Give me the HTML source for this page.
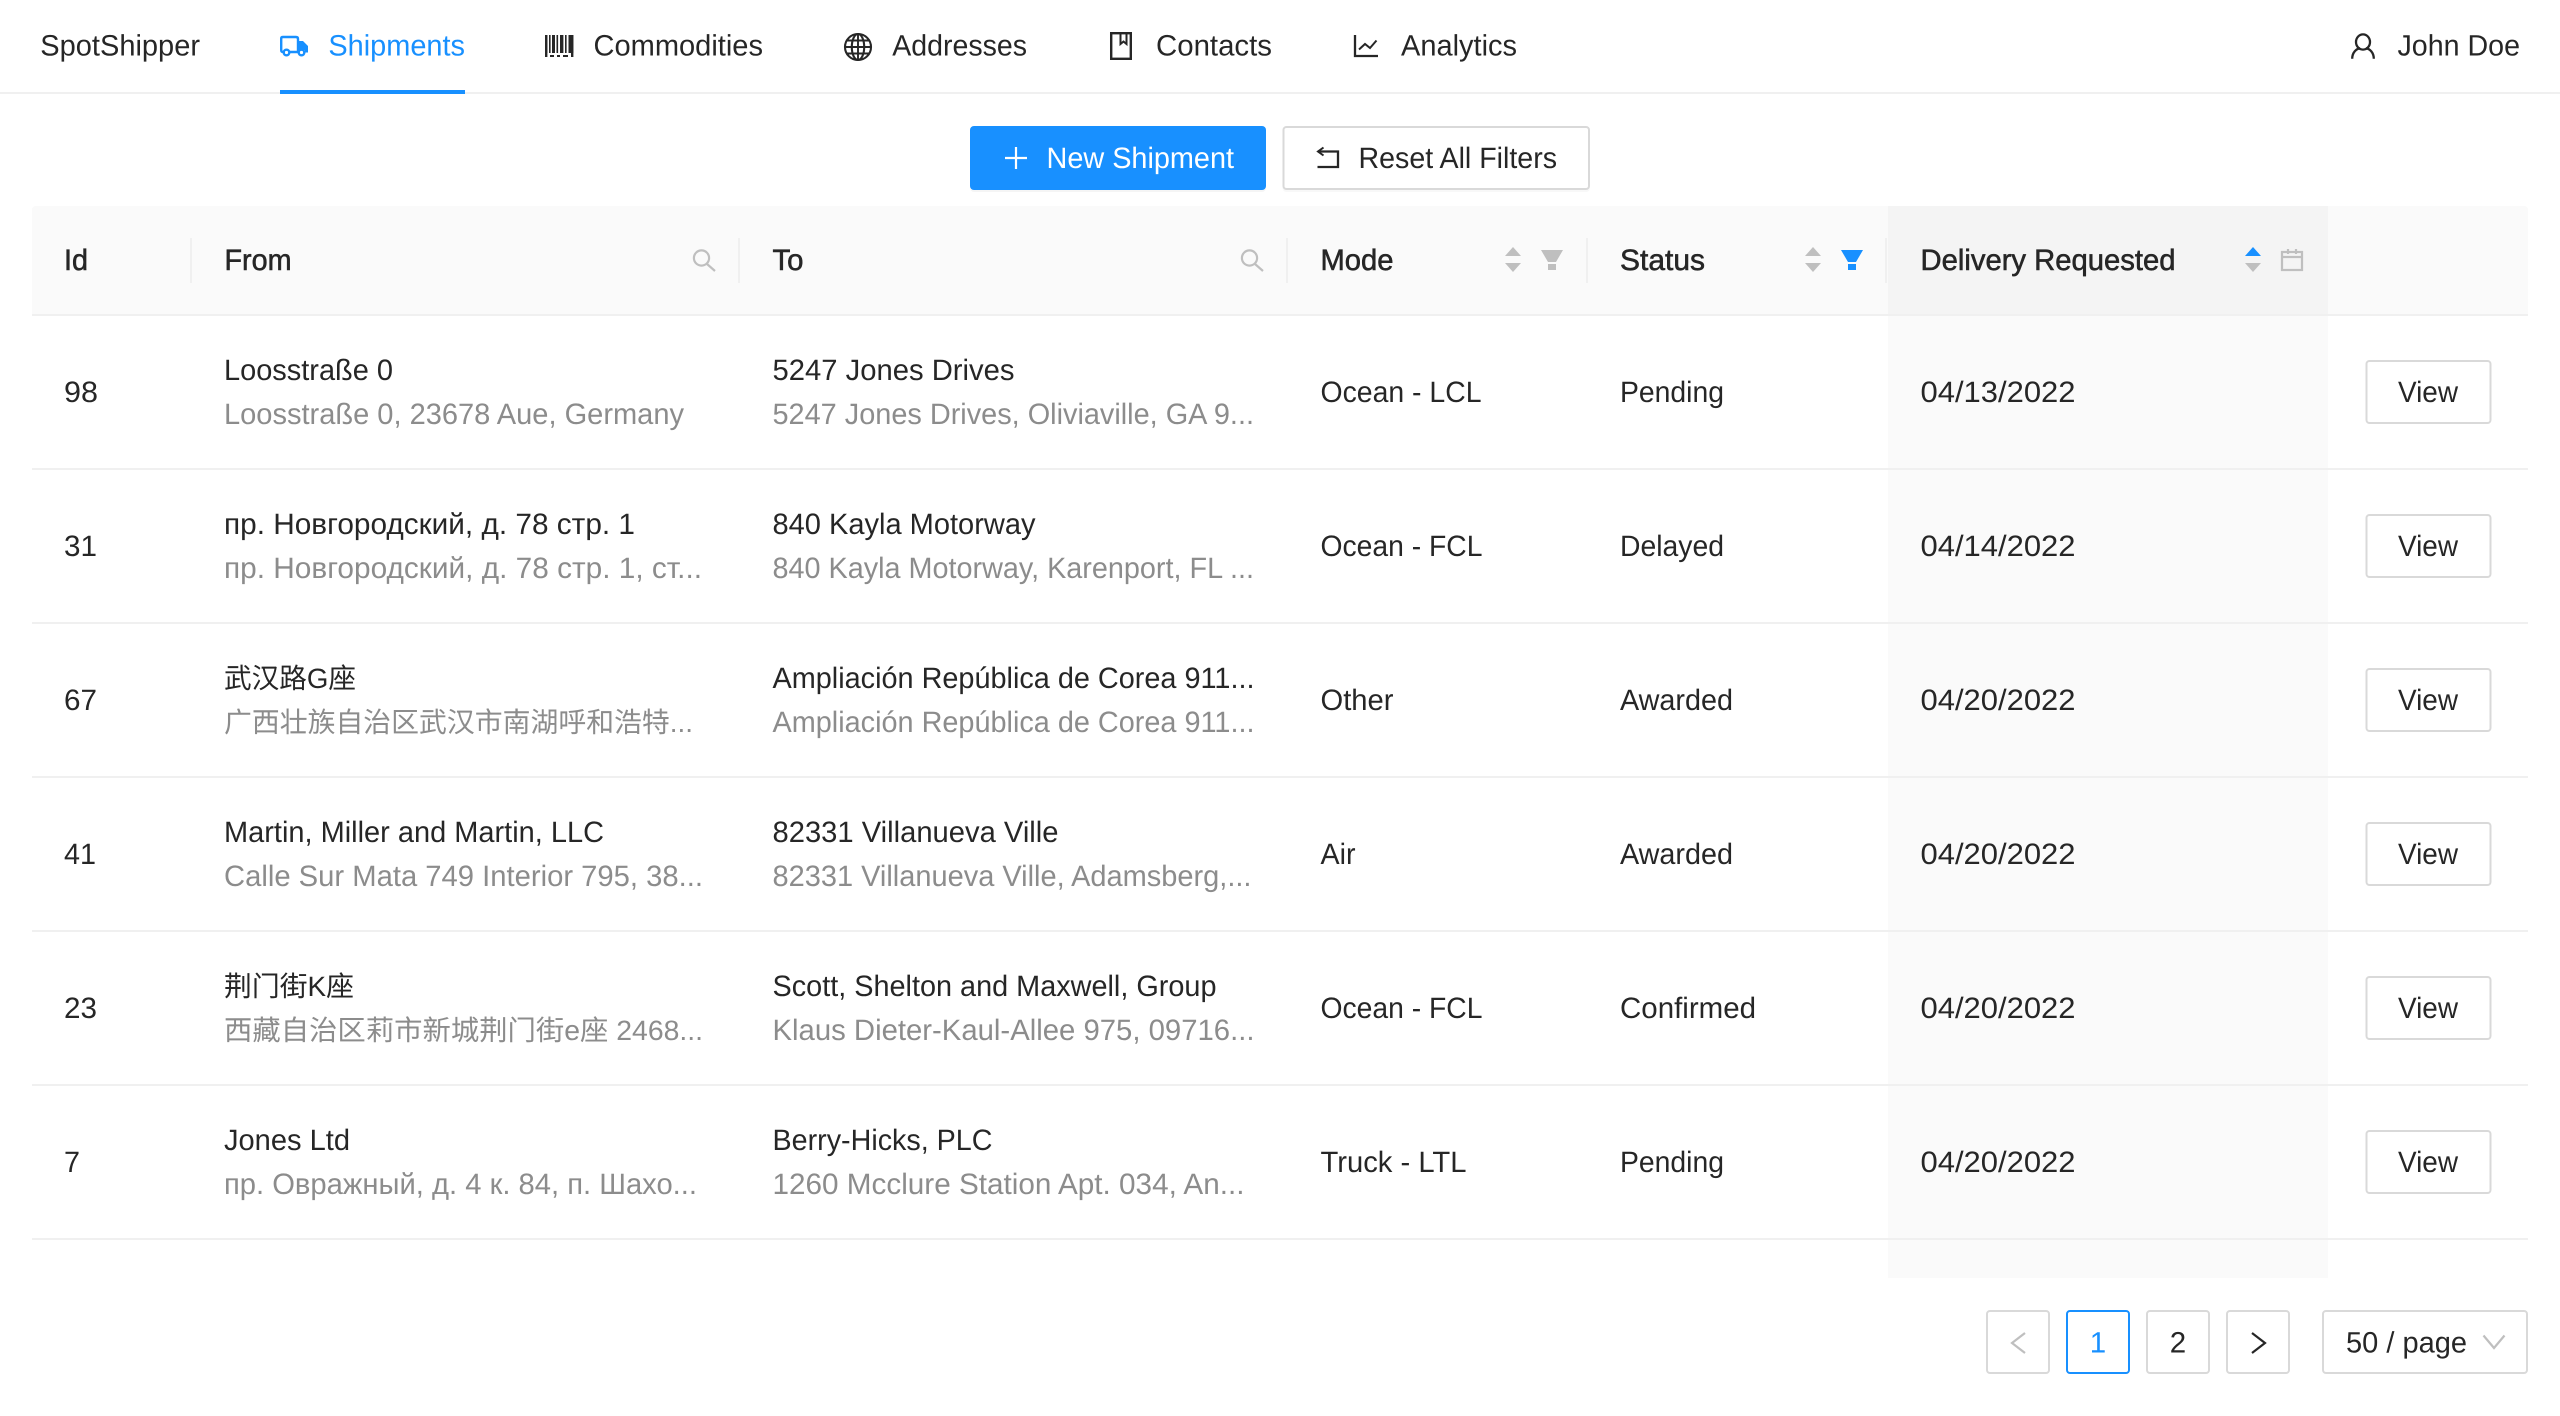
<!DOCTYPE html>
<html lang="en"><head><meta charset="utf-8"><title>SpotShipper</title>
<style>
html,body{margin:0;padding:0;background:#fff;width:2560px;height:1416px;overflow:hidden}
svg{display:block}
text{font-family:"Liberation Sans","Noto Sans CJK SC",sans-serif;font-size:29.5px;fill:#262626;text-rendering:geometricPrecision}
.s{fill:#8c8c8c}
.c{font-size:28px}
.h{stroke:#262626;stroke-width:.55px}
.g{fill:none;stroke:#bfbfbf;stroke-width:2.2}
</style></head><body>
<svg width="2560" height="1416" viewBox="0 0 2560 1416" xmlns="http://www.w3.org/2000/svg">
<rect width="2560" height="1416" fill="#fff"/>
<!-- nav -->
<rect x="0" y="92" width="2560" height="2" fill="#f0f0f0"/>
<rect x="280" y="90" width="185" height="4" fill="#1890ff"/>
<text x="40.3" y="55.5" textLength="159.7" lengthAdjust="spacingAndGlyphs">SpotShipper</text>
<text x="328.4" y="55.5" textLength="136.6" lengthAdjust="spacingAndGlyphs" style="fill:#1890ff">Shipments</text>
<text x="593.5" y="55.5" textLength="169.5" lengthAdjust="spacingAndGlyphs">Commodities</text>
<text x="892.3" y="55.5" textLength="134.7" lengthAdjust="spacingAndGlyphs">Addresses</text>
<text x="1156" y="55.5" textLength="116" lengthAdjust="spacingAndGlyphs">Contacts</text>
<text x="1401" y="55.5" textLength="116" lengthAdjust="spacingAndGlyphs">Analytics</text>
<text x="2397.5" y="55.5" textLength="122.5" lengthAdjust="spacingAndGlyphs">John Doe</text>
<!-- truck -->
<g fill="none" stroke="#1890ff" stroke-width="2.4">
<path d="M285 52H283Q281.2 52 281.2 50V38.5Q281.2 37 283 37H296Q298 37 298 39V52H290"/>
<circle cx="286.5" cy="52.5" r="2.8"/><circle cx="301.5" cy="52.5" r="2.8"/>
</g>
<path d="M298 41H303L308 46V52.5H305V50H298Z" fill="#1890ff"/>
<!-- barcode -->
<g fill="#262626">
<rect x="545" y="35" width="2.4" height="18"/><rect x="549" y="35" width="1.6" height="18"/>
<rect x="552" y="35" width="3" height="18"/><rect x="556.5" y="35" width="1.6" height="18"/>
<rect x="560" y="35" width="3.4" height="18"/><rect x="565" y="35" width="1.6" height="18"/>
<rect x="568.5" y="35" width="4.8" height="18"/><rect x="545" y="35" width="2.4" height="22"/>
<rect x="571" y="35" width="2.4" height="22"/><rect x="550" y="55" width="4" height="2"/>
<rect x="557" y="55" width="3" height="2"/><rect x="563" y="55" width="5" height="2"/>
</g>
<!-- globe -->
<g fill="none" stroke="#262626" stroke-width="2.1">
<circle cx="858" cy="47" r="13"/><ellipse cx="858" cy="47" rx="6.2" ry="13"/>
<path d="M858 34V60M845 47H871M847 40.5H869M847 53.5H869" stroke-width="1.9"/>
</g>
<!-- book -->
<g fill="none" stroke="#262626" stroke-width="2.4">
<rect x="1111.2" y="33.2" width="19.6" height="25.6"/>
<path d="M1120.5 33.5V44L1123.5 41.5L1126.5 44V33.5" stroke-width="2"/>
</g>
<!-- analytics -->
<path d="M1355 35V56H1378" fill="none" stroke="#262626" stroke-width="2.3"/>
<path d="M1359 49.5L1365 44L1370 48L1376.5 40.5" fill="none" stroke="#262626" stroke-width="2"/>
<!-- user -->
<g fill="none" stroke="#262626" stroke-width="2.3">
<ellipse cx="2363" cy="42" rx="7" ry="7.6"/>
<path d="M2352.2 58.8C2352.2 52.5 2356.5 48.6 2360 48.3M2373.8 58.8C2373.8 52.5 2369.5 48.6 2366 48.3"/>
</g>
<!-- action buttons -->
<rect x="970" y="128" width="296" height="64" rx="4" fill="#f5f5f5"/>
<rect x="970" y="126" width="296" height="64" rx="4" fill="#1890ff"/>
<path d="M1005 158H1027M1016 147V169" stroke="#fff" stroke-width="2.2" fill="none"/>
<text x="1046.5" y="168" textLength="187.5" lengthAdjust="spacingAndGlyphs" style="fill:#fff">New Shipment</text>
<rect x="1282.5" y="128" width="307.5" height="64" rx="4" fill="#f8f8f8"/>
<rect x="1283.5" y="127" width="305.5" height="62" rx="3" fill="#fff" stroke="#d9d9d9" stroke-width="2"/>
<path d="M1318 151.5H1338V167H1317.5" fill="none" stroke="#262626" stroke-width="2.3"/>
<path d="M1323.5 147.5L1318 151.5L1323.5 155.5" fill="none" stroke="#262626" stroke-width="2"/>
<text x="1358.5" y="168" textLength="198.5" lengthAdjust="spacingAndGlyphs">Reset All Filters</text>
<!-- table header -->
<path d="M32 314V210Q32 206 36 206H2524Q2528 206 2528 210V314Z" fill="#fafafa"/>
<rect x="1888" y="206" width="440" height="108" fill="#f4f4f4"/>
<rect x="1888" y="316" width="440" height="962" fill="#fafafa"/>
<g fill="#f0f0f0">
<rect x="32" y="314" width="2496" height="2"/>
<rect x="190" y="238" width="2" height="45"/><rect x="738" y="238" width="2" height="45"/>
<rect x="1286" y="238" width="2" height="45"/><rect x="1586" y="238" width="2" height="45"/>
<rect x="1885" y="238" width="2" height="45"/>
<rect x="32" y="468" width="2496" height="2"/><rect x="32" y="622" width="2496" height="2"/>
<rect x="32" y="776" width="2496" height="2"/><rect x="32" y="930" width="2496" height="2"/>
<rect x="32" y="1084" width="2496" height="2"/><rect x="32" y="1238" width="2496" height="2"/>
</g>
<text class="h" x="64" y="270" textLength="24" lengthAdjust="spacingAndGlyphs">Id</text>
<text class="h" x="224.5" y="270" textLength="67" lengthAdjust="spacingAndGlyphs">From</text>
<text class="h" x="772.5" y="270" textLength="31" lengthAdjust="spacingAndGlyphs">To</text>
<text class="h" x="1320.5" y="270" textLength="73" lengthAdjust="spacingAndGlyphs">Mode</text>
<text class="h" x="1620" y="270" textLength="85" lengthAdjust="spacingAndGlyphs">Status</text>
<text class="h" x="1920.5" y="270" textLength="255" lengthAdjust="spacingAndGlyphs">Delivery Requested</text>
<!-- search icons -->
<g class="g"><circle cx="701.5" cy="258" r="7.6"/><path d="M707 264L715 271"/>
<circle cx="1249.5" cy="258" r="7.6"/><path d="M1255 264L1263 271"/></g>
<!-- sorters + filters -->
<g fill="#bfbfbf">
<path d="M1513 247L1521 256H1505Z"/><path d="M1513 272L1521 263H1505Z"/>
<path d="M1541 250H1563L1556 262H1548Z"/><rect x="1548" y="264" width="8" height="6"/>
<path d="M1813 247L1821 256H1805Z"/><path d="M1813 272L1821 263H1805Z"/>
<path d="M2253 272L2261 263H2245Z"/>
</g>
<g fill="#1890ff">
<path d="M1841 250H1863L1856 262H1848Z"/><rect x="1848" y="264" width="8" height="6"/>
<path d="M2253 247L2261 256H2245Z"/>
</g>
<g class="g"><rect x="2282" y="252" width="20" height="18"/><path d="M2282 257H2302M2288 249V254M2296 249V254"/></g>
<!-- row 1 -->
<text x="64" y="402" textLength="34" lengthAdjust="spacingAndGlyphs">98</text>
<text x="224" y="380" textLength="169" lengthAdjust="spacingAndGlyphs">Loosstraße 0</text>
<text class="s" x="224" y="424" textLength="460" lengthAdjust="spacingAndGlyphs">Loosstraße 0, 23678 Aue, Germany</text>
<text x="772.5" y="380" textLength="242" lengthAdjust="spacingAndGlyphs">5247 Jones Drives</text>
<text class="s" x="772.5" y="424" textLength="481.5" lengthAdjust="spacingAndGlyphs">5247 Jones Drives, Oliviaville, GA 9...</text>
<text x="1320.5" y="402" textLength="161" lengthAdjust="spacingAndGlyphs">Ocean - LCL</text>
<text x="1620" y="402" textLength="104" lengthAdjust="spacingAndGlyphs">Pending</text>
<text x="1920.5" y="402" textLength="155" lengthAdjust="spacingAndGlyphs">04/13/2022</text>
<!-- row 2 -->
<text x="64" y="556" textLength="33" lengthAdjust="spacingAndGlyphs">31</text>
<text x="224" y="534" textLength="411" lengthAdjust="spacingAndGlyphs">пр. Новгородский, д. 78 стр. 1</text>
<text class="s" x="224" y="578" textLength="478" lengthAdjust="spacingAndGlyphs">пр. Новгородский, д. 78 стр. 1, ст...</text>
<text x="772.5" y="534" textLength="263" lengthAdjust="spacingAndGlyphs">840 Kayla Motorway</text>
<text class="s" x="772.5" y="578" textLength="481.5" lengthAdjust="spacingAndGlyphs">840 Kayla Motorway, Karenport, FL ...</text>
<text x="1320.5" y="556" textLength="162" lengthAdjust="spacingAndGlyphs">Ocean - FCL</text>
<text x="1620" y="556" textLength="104" lengthAdjust="spacingAndGlyphs">Delayed</text>
<text x="1920.5" y="556" textLength="155" lengthAdjust="spacingAndGlyphs">04/14/2022</text>
<!-- row 3 -->
<text x="64" y="710" textLength="33" lengthAdjust="spacingAndGlyphs">67</text>
<text class="c" x="224" y="688" textLength="132" lengthAdjust="spacingAndGlyphs">武汉路G座</text>
<text class="s c" x="224" y="732" textLength="469" lengthAdjust="spacingAndGlyphs">广西壮族自治区武汉市南湖呼和浩特...</text>
<text x="772.5" y="688" textLength="482" lengthAdjust="spacingAndGlyphs">Ampliación República de Corea 911...</text>
<text class="s" x="772.5" y="732" textLength="482" lengthAdjust="spacingAndGlyphs">Ampliación República de Corea 911...</text>
<text x="1320.5" y="710" textLength="73" lengthAdjust="spacingAndGlyphs">Other</text>
<text x="1620" y="710" textLength="113" lengthAdjust="spacingAndGlyphs">Awarded</text>
<text x="1920.5" y="710" textLength="155" lengthAdjust="spacingAndGlyphs">04/20/2022</text>
<!-- row 4 -->
<text x="64" y="864" textLength="32" lengthAdjust="spacingAndGlyphs">41</text>
<text x="224" y="842" textLength="380" lengthAdjust="spacingAndGlyphs">Martin, Miller and Martin, LLC</text>
<text class="s" x="224" y="886" textLength="479" lengthAdjust="spacingAndGlyphs">Calle Sur Mata 749 Interior 795, 38...</text>
<text x="772.5" y="842" textLength="286" lengthAdjust="spacingAndGlyphs">82331 Villanueva Ville</text>
<text class="s" x="772.5" y="886" textLength="479" lengthAdjust="spacingAndGlyphs">82331 Villanueva Ville, Adamsberg,...</text>
<text x="1320.5" y="864" textLength="35" lengthAdjust="spacingAndGlyphs">Air</text>
<text x="1620" y="864" textLength="113" lengthAdjust="spacingAndGlyphs">Awarded</text>
<text x="1920.5" y="864" textLength="155" lengthAdjust="spacingAndGlyphs">04/20/2022</text>
<!-- row 5 -->
<text x="64" y="1018" textLength="33" lengthAdjust="spacingAndGlyphs">23</text>
<text class="c" x="224" y="996" textLength="130" lengthAdjust="spacingAndGlyphs">荆门街K座</text>
<text class="s c" x="224" y="1040" textLength="479" lengthAdjust="spacingAndGlyphs">西藏自治区莉市新城荆门街e座 2468...</text>
<text x="772.5" y="996" textLength="444" lengthAdjust="spacingAndGlyphs">Scott, Shelton and Maxwell, Group</text>
<text class="s" x="772.5" y="1040" textLength="482" lengthAdjust="spacingAndGlyphs">Klaus Dieter-Kaul-Allee 975, 09716...</text>
<text x="1320.5" y="1018" textLength="162" lengthAdjust="spacingAndGlyphs">Ocean - FCL</text>
<text x="1620" y="1018" textLength="136" lengthAdjust="spacingAndGlyphs">Confirmed</text>
<text x="1920.5" y="1018" textLength="155" lengthAdjust="spacingAndGlyphs">04/20/2022</text>
<!-- row 6 -->
<text x="64" y="1172" textLength="16" lengthAdjust="spacingAndGlyphs">7</text>
<text x="224" y="1150" textLength="126" lengthAdjust="spacingAndGlyphs">Jones Ltd</text>
<text class="s" x="224" y="1194" textLength="473" lengthAdjust="spacingAndGlyphs">пр. Овражный, д. 4 к. 84, п. Шахо...</text>
<text x="772.5" y="1150" textLength="220" lengthAdjust="spacingAndGlyphs">Berry-Hicks, PLC</text>
<text class="s" x="772.5" y="1194" textLength="472" lengthAdjust="spacingAndGlyphs">1260 Mcclure Station Apt. 034, An...</text>
<text x="1320.5" y="1172" textLength="146" lengthAdjust="spacingAndGlyphs">Truck - LTL</text>
<text x="1620" y="1172" textLength="104" lengthAdjust="spacingAndGlyphs">Pending</text>
<text x="1920.5" y="1172" textLength="155" lengthAdjust="spacingAndGlyphs">04/20/2022</text>
<!-- view buttons -->
<g fill="#fff" stroke="#d9d9d9" stroke-width="2">
<rect x="2366.5" y="361" width="124" height="62" rx="3"/>
<rect x="2366.5" y="515" width="124" height="62" rx="3"/>
<rect x="2366.5" y="669" width="124" height="62" rx="3"/>
<rect x="2366.5" y="823" width="124" height="62" rx="3"/>
<rect x="2366.5" y="977" width="124" height="62" rx="3"/>
<rect x="2366.5" y="1131" width="124" height="62" rx="3"/>
</g>
<text x="2398" y="402" textLength="60" lengthAdjust="spacingAndGlyphs">View</text>
<text x="2398" y="556" textLength="60" lengthAdjust="spacingAndGlyphs">View</text>
<text x="2398" y="710" textLength="60" lengthAdjust="spacingAndGlyphs">View</text>
<text x="2398" y="864" textLength="60" lengthAdjust="spacingAndGlyphs">View</text>
<text x="2398" y="1018" textLength="60" lengthAdjust="spacingAndGlyphs">View</text>
<text x="2398" y="1172" textLength="60" lengthAdjust="spacingAndGlyphs">View</text>
<!-- pagination -->
<g fill="#fff" stroke="#d9d9d9" stroke-width="2">
<rect x="1987" y="1311" width="62" height="62" rx="3"/>
<rect x="2147" y="1311" width="62" height="62" rx="3"/>
<rect x="2227" y="1311" width="62" height="62" rx="3"/>
<rect x="2323" y="1311" width="204" height="62" rx="3"/>
</g>
<rect x="2067" y="1311" width="62" height="62" rx="3" fill="#fff" stroke="#1890ff" stroke-width="2"/>
<path d="M2025 1333L2012 1343L2025 1353" fill="none" stroke="#bfbfbf" stroke-width="2.2"/>
<path d="M2252 1333L2265 1343L2252 1353" fill="none" stroke="#262626" stroke-width="2.2"/>
<text x="2098" y="1352.5" text-anchor="middle" style="fill:#1890ff">1</text>
<text x="2178" y="1352.5" text-anchor="middle">2</text>
<text x="2346" y="1352.5" textLength="121" lengthAdjust="spacingAndGlyphs">50 / page</text>
<path d="M2483.5 1335.5L2494 1348L2504.5 1335.5" fill="none" stroke="#bfbfbf" stroke-width="2.2"/>
</svg>
</body></html>
